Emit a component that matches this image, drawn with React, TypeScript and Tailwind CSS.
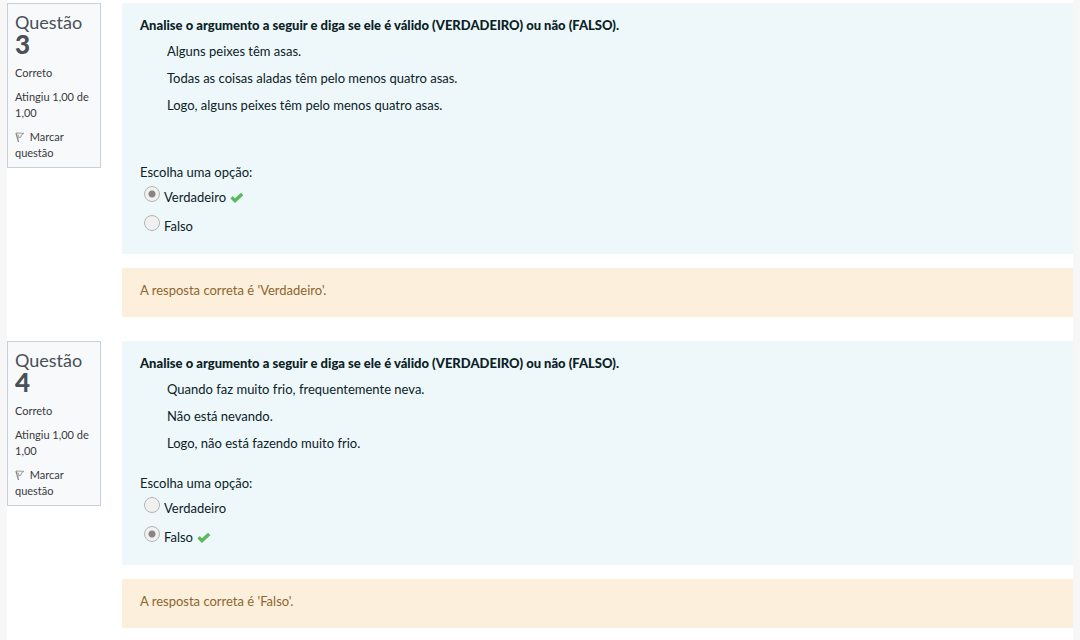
type Question = {
  number: number;
  lines: string[];
  spaced: boolean;
  answer: string;
};

const QUESTIONS: Question[] = [
  {
    number: 3,
    lines: [
      "Alguns peixes têm asas.",
      "Todas as coisas aladas têm pelo menos quatro asas.",
      "Logo, alguns peixes têm pelo menos quatro asas.",
    ],
    spaced: true,
    answer: "Verdadeiro",
  },
  {
    number: 4,
    lines: [
      "Quando faz muito frio, frequentemente neva.",
      "Não está nevando.",
      "Logo, não está fazendo muito frio.",
    ],
    spaced: false,
    answer: "Falso",
  },
];

const OPTIONS = ["Verdadeiro", "Falso"];

function FlagIcon() {
  return (
    <svg viewBox="0 0 10 12" className="mr-0.5 inline-block h-3 w-2.5 align-[-2px]" fill="none" aria-hidden="true">
      <path d="M1 2 3.5 11" stroke="#8a8a8a" strokeWidth="1.3" />
      <path d="M1.2 2 9 2.3 6.3 4 5.8 6.2 2.5 7.2M2.8 3.5 4 6" stroke="#9a9a9a" strokeWidth="1" />
    </svg>
  );
}

function CheckIcon() {
  return (
    <svg viewBox="0 0 14 11" className="ml-1 h-[11px] w-3.5" aria-label="Correto" role="img">
      <path d="M1.6 5.3 5 8.6 12.2 1.9" fill="none" stroke="#5cb85c" strokeWidth="3.4" />
    </svg>
  );
}

function InfoCard({ number }: { number: number }) {
  return (
    <aside className="w-[94px] shrink-0 self-start border border-[#cad0d7] bg-[#f8f9fb] px-[7px] pt-[7px] pb-1.5 text-[11px] leading-4 text-[#373a3c]">
      <h3 className="text-lg leading-[22px] text-[#495057]">
        Questão <span className="block text-[26px] leading-[22px] font-black">{number}</span>
      </h3>
      <div className="mt-2.5">Correto</div>
      <div className="mt-2">Atingiu 1,00 de 1,00</div>
      <button type="button" className="mt-2 block text-left">
        <FlagIcon /> Marcar questão
      </button>
    </aside>
  );
}

function QuestionBlock({ number, lines, spaced, answer }: Question) {
  return (
    <section className="flex gap-[21px]">
      <InfoCard number={number} />
      <div className="flex grow flex-col gap-3.5">
        <div className="bg-[#eef8fb] px-[18px] pt-3 pb-[13px] text-[#0b2226]">
          <p className="leading-5 font-black">
            Analise o argumento a seguir e diga se ele é válido (VERDADEIRO) ou não (FALSO).
          </p>
          <div className="mt-1.5 ml-[27px] flex flex-col gap-[7px] leading-5">
            {lines.map((line) => (
              <p key={line}>{line}</p>
            ))}
          </div>
          <fieldset className={spaced ? "mt-[47px]" : "mt-5"}>
            <legend className="leading-5">Escolha uma opção:</legend>
            <div className="flex flex-col pt-px pl-1">
              {OPTIONS.map((option) => (
                <label key={option} className="flex h-[29px] items-center">
                  <input
                    type="radio"
                    name={`q${number}`}
                    defaultChecked={option === answer}
                    className="mr-1 mb-2 size-4 appearance-none rounded-full border border-[#b4b4b4] bg-[#f0f0f0] checked:bg-[radial-gradient(circle,#858585_3px,#f0f0f0_4px)]"
                  />
                  {option}
                  {option === answer && <CheckIcon />}
                </label>
              ))}
            </div>
          </fieldset>
        </div>
        <div className="bg-[#fcefdc] px-[18px] pt-3 pb-[17px] leading-5 text-[#8e662e]">
          A resposta correta é '{answer}'.
        </div>
      </div>
    </section>
  );
}

export default function App() {
  return (
    <div className="min-h-screen bg-[#f7f7f7] px-[7px] font-['Lato',sans-serif] text-[13px]">
      <main className="flex min-h-screen flex-col gap-6 bg-white pt-[3px]">
        {QUESTIONS.map((question) => (
          <QuestionBlock key={question.number} {...question} />
        ))}
      </main>
    </div>
  );
}
